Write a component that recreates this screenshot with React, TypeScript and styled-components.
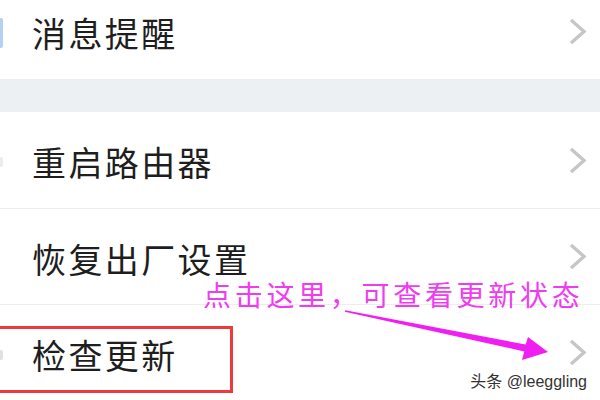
import { createGlobalStyle, styled } from "styled-components";

const GlobalStyle = createGlobalStyle`
  html, body {
    margin: 0;
    padding: 0;
    background: #fff;
  }
  body {
    width: 600px;
    height: 400px;
    overflow: hidden;
    font-family: "Noto Sans CJK SC", "Noto Sans", sans-serif;
  }
`;

type Item = { label: string; mark?: { color: string; height: number }; divider?: boolean };

const topGroup: Item[] = [{ label: "消息提醒", mark: { color: "#b5d0f2", height: 30 } }];
const bottomGroup: Item[] = [
  { label: "重启路由器", mark: { color: "#ececec", height: 10 } },
  { label: "恢复出厂设置", divider: true },
  { label: "检查更新", mark: { color: "#e2e2e2", height: 10 }, divider: true },
];

const Chevron = () => (
  <ChevronIcon viewBox="0 0 19 29">
    <polyline points="3,3 16,14.5 3,26" fill="none" stroke="#c6c6c6" strokeWidth="3.4" />
  </ChevronIcon>
);

const ListRow = ({ item }: { item: Item }) => (
  <Row $divider={item.divider}>
    <Mark $color={item.mark?.color} $height={item.mark?.height ?? 0} />
    <Label>{item.label}</Label>
    <Chevron />
  </Row>
);

const App = () => {
  return (
    <Page>
      <GlobalStyle />
      <List>
        {topGroup.map((item) => (
          <ListRow key={item.label} item={item} />
        ))}
        <Band />
        {bottomGroup.map((item) => (
          <ListRow key={item.label} item={item} />
        ))}
      </List>

      <Highlight />
      <Note>点击这里，可查看更新状态</Note>
      <Arrow viewBox="0 0 215 60">
        <polygon
          points="5.2,5.2 185.7,39.6 188,32 208,47 182,55 184.3,46.4 4.8,6.8"
          fill="#f01ef0"
        />
      </Arrow>
      <Watermark>头条 @leeggling</Watermark>
    </Page>
  );
};

const Page = styled.div`
  position: relative;
  width: 600px;
  height: 400px;
  overflow: hidden;
  background: #fff;
`;

const List = styled.div`
  display: flex;
  flex-direction: column;
  margin-top: -17px;
`;

const Band = styled.div`
  height: 33px;
  background: #edf0f3;
`;

const Row = styled.div<{ $divider?: boolean }>`
  display: flex;
  align-items: center;
  height: 96px;
  box-sizing: border-box;
  padding-right: 13px;
  border-top: ${(p) => (p.$divider ? "1px solid #ededed" : "none")};
  background: #fff;
`;

const Mark = styled.span<{ $color?: string; $height: number }>`
  width: 3px;
  height: ${(p) => p.$height}px;
  background: ${(p) => p.$color ?? "transparent"};
  border-radius: 0 2px 2px 0;
  margin-top: 4px;
`;

const Label = styled.span`
  flex: 1;
  margin-left: 29px;
  margin-top: 4px;
  font-size: 34px;
  letter-spacing: 2.4px;
  line-height: 1;
  color: #1e1e1e;
`;

const ChevronIcon = styled.svg`
  width: 19px;
  height: 29px;
  flex-shrink: 0;
`;

const Highlight = styled.div`
  position: absolute;
  left: -10px;
  top: 326px;
  width: 243px;
  height: 67px;
  box-sizing: border-box;
  border: 3px solid #f0393a;
`;

const Note = styled.div`
  position: absolute;
  left: 203px;
  top: 280px;
  font-size: 28px;
  letter-spacing: 3.7px;
  line-height: 1;
  color: #f03cf0;
  white-space: nowrap;
`;

const Arrow = styled.svg`
  position: absolute;
  left: 340px;
  top: 305px;
  width: 215px;
  height: 60px;
`;

const Watermark = styled.div`
  position: absolute;
  right: 13px;
  bottom: 10px;
  font-family: "Liberation Sans", "Noto Sans CJK SC", sans-serif;
  font-size: 16px;
  line-height: 1;
  color: #333;
  text-shadow: 0 0 2px #fff, 0 0 2px #fff;
  white-space: nowrap;
`;

export default App;
